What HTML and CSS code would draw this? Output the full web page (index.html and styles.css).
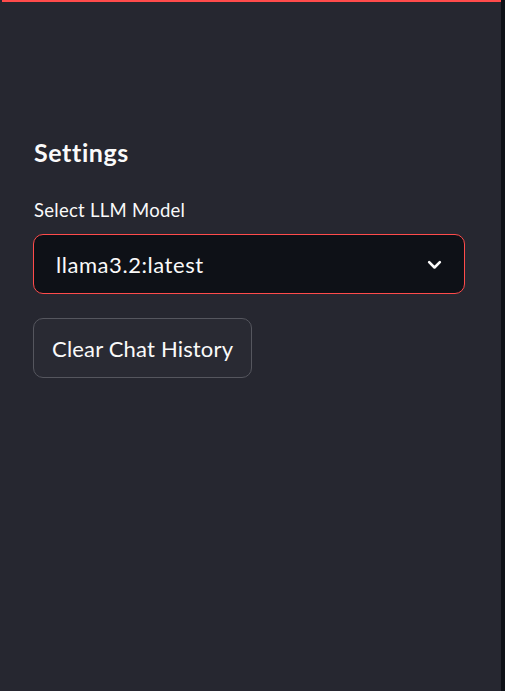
FILE: index.html
```html
<!DOCTYPE html>
<html>
<head>
<meta charset="utf-8">
<link rel="stylesheet" href="styles.css">
</head>
<body>
<div class="app">
  <div class="topbar"></div>
  <aside class="sidebar">
    <h2 class="title">Settings</h2>
    <label class="label">Select LLM Model</label>
    <div class="select">
      <span class="select-value">llama3.2:latest</span>
      <svg class="chev" width="16" height="16" viewBox="0 0 16 16"><path d="M3.5 6l4.5 4.5L12.5 6" fill="none" stroke="#fafafa" stroke-width="2.2" stroke-linecap="round" stroke-linejoin="round"/></svg>
    </div>
    <button class="btn">Clear Chat History</button>
  </aside>
  <div class="main"></div>
</div>
</body>
</html>
```

FILE: styles.css
```css
html, body {
  margin: 0;
  padding: 0;
  height: 100%;
  background: #262730;
  font-family: Lato, "Liberation Sans", sans-serif;
  color: #fafafa;
}
.app {
  position: relative;
  display: flex;
  height: 691px;
}
.topbar {
  position: absolute;
  top: 0;
  left: 2px;
  right: 4px;
  height: 2px;
  background: #ff4b4b;
}
.sidebar {
  flex: 1;
  background: #262730;
  padding: 137px 36px 0 33px;
  display: flex;
  flex-direction: column;
  align-items: flex-start;
}
.main {
  width: 4px;
  background: #0e1117;
}
.title {
  margin: 0;
  font-size: 25px;
  font-weight: 700;
  line-height: 30px;
  letter-spacing: 0.6px;
  padding-left: 1px;
}
.label {
  margin-top: 31px;
  font-size: 18.5px;
  line-height: 24px;
  letter-spacing: 0.27px;
  padding-left: 1px;
}
.select {
  margin-top: 12px;
  align-self: stretch;
  box-sizing: border-box;
  height: 60px;
  background: #0e1117;
  border: 1px solid #ff4b4b;
  border-radius: 10px;
  display: flex;
  align-items: center;
  justify-content: space-between;
  padding: 0 20px 0 22px;
}
.select-value {
  font-size: 22px;
  letter-spacing: 0.55px;
}
.chev {
  width: 19px;
  height: 19px;
}
.btn {
  margin-top: 24px;
  box-sizing: border-box;
  height: 60px;
  padding: 0 18px;
  background: #292a33;
  border: 1px solid #55565e;
  border-radius: 10px;
  color: #fafafa;
  font-family: inherit;
  font-size: 22px;
  letter-spacing: 0.18px;
}
```
